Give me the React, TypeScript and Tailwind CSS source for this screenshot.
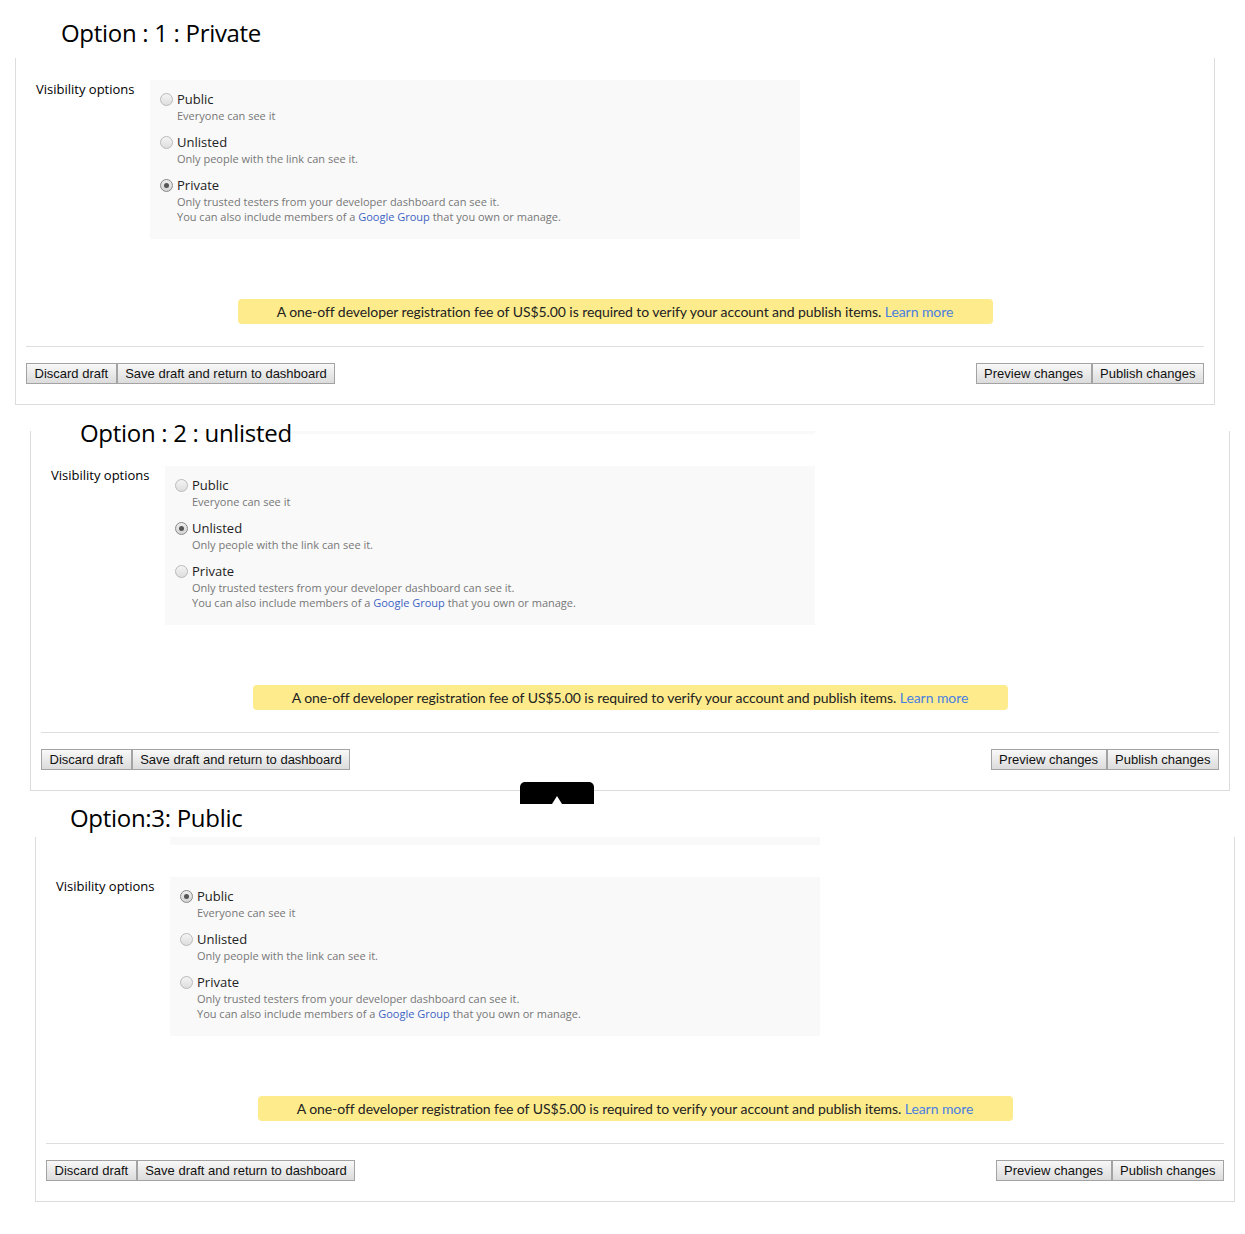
import React from 'react';

type Choice = 'public' | 'unlisted' | 'private';

interface PanelProps {
  title: string;
  titleClass: string; // top margin + left indent of the heading
  boxClass: string; // offset of the bordered box
  selected: Choice;
  strip?: 'thin' | 'thick';
}

const Radio: React.FC<{ checked: boolean }> = ({ checked }) => (
  <span
    className={`mt-[3px] flex h-[13px] w-[13px] shrink-0 items-center justify-center rounded-full border bg-gradient-to-b ${
      checked ? 'border-[#8a8a8a] from-[#eeeeee] to-[#d4d4d4]' : 'border-[#b9b9b9] from-[#f4f4f4] to-[#dedede]'
    }`}
  >
    {checked && <span className="h-[5px] w-[5px] rounded-full bg-[#555]" />}
  </span>
);

const Option: React.FC<{ label: string; checked: boolean; children: React.ReactNode }> = ({ label, checked, children }) => (
  <div>
    <div className="flex items-start gap-[4px]">
      <Radio checked={checked} />
      <span className="text-[13px] leading-[18px] text-[#222]">{label}</span>
    </div>
    <div className="pl-[17px] text-[11px] leading-[15px] text-[#777]">{children}</div>
  </div>
);

const Btn: React.FC<{ children: React.ReactNode }> = ({ children }) => (
  <button className="h-[21px] border border-[#a3a3a3] bg-gradient-to-b from-[#f8f8f8] to-[#dcdcdc] px-[7.5px] font-['Liberation_Sans',Arial,sans-serif] text-[13px] leading-[15px] text-[#111]">
    {children}
  </button>
);

const Panel: React.FC<PanelProps> = ({ title, titleClass, boxClass, selected, strip }) => (
  <section>
    {/* Heading typed over the screenshot */}
    <h2 className={`relative z-10 h-[32px] text-[24px] leading-[31px] tracking-[-0.3px] text-black ${titleClass}`}>{title}</h2>

    <div className={`w-[1200px] border-x border-b border-[#dcdcdc] px-[10px] ${boxClass}`}>
      {strip && (
        <div className={`ml-[124px] w-[650px] bg-[#f9f9f9] ${strip === 'thin' ? 'mb-[32px] h-[3px]' : 'mb-[32px] h-[8px]'}`} />
      )}

      <div className={`flex ${strip ? '' : 'pt-[22px]'}`}>
        <div className="w-[124px] shrink-0 pl-[10px] text-[13px] leading-[18px] text-black">Visibility options</div>
        <div className="flex h-[159px] w-[650px] flex-col gap-[10px] bg-[#f9f9f9] px-[10px] pt-[10px]">
          <Option label="Public" checked={selected === 'public'}>
            Everyone can see it
          </Option>
          <Option label="Unlisted" checked={selected === 'unlisted'}>
            Only people with the link can see it.
          </Option>
          <Option label="Private" checked={selected === 'private'}>
            Only trusted testers from your developer dashboard can see it.
            <br />
            You can also include members of a <a className="text-[#3d63c4]">Google Group</a> that you own or manage.
          </Option>
        </div>
      </div>

      {/* Registration fee notice */}
      <div className="mx-auto mt-[60px] flex h-[25px] w-[755px] items-center justify-center rounded-[4px] bg-[#fdeb8c] font-['Lato',sans-serif] text-[14px] tracking-[-0.07px] text-[#222]">
        <span>
          A one-off developer registration fee of US$5.00 is required to verify your account and publish items.{' '}
          <a className="text-[#4a7fe0]">Learn more</a>
        </span>
      </div>

      <div className="mt-[22px] h-px bg-[#dedede]" />

      <div className="mt-[16px] flex justify-between pb-[20px]">
        <div className="flex">
          <Btn>Discard draft</Btn>
          <Btn>Save draft and return to dashboard</Btn>
        </div>
        <div className="flex">
          <Btn>Preview changes</Btn>
          <Btn>Publish changes</Btn>
        </div>
      </div>
    </div>
  </section>
);

export default function App() {
  return (
    <div className="relative h-[1234px] w-[1245px] overflow-hidden bg-white font-['Open_Sans','Noto_Sans',sans-serif]">
      <Panel title="Option : 1 : Private" titleClass="mt-[17px] pl-[61px]" boxClass="ml-[15px] mt-[9px]" selected="private" />
      <Panel
        title="Option : 2 : unlisted"
        titleClass="mt-[12px] pl-[80px]"
        boxClass="ml-[30px] -mt-[18px]"
        selected="unlisted"
        strip="thin"
      />
      <Panel
        title="Option:3: Public"
        titleClass="mt-[11px] pl-[70px]"
        boxClass="ml-[35px] mt-[3px]"
        selected="public"
        strip="thick"
      />

      {/* black tab left over from the screen grab */}
      <div className="absolute left-[520px] top-[782px] z-20 h-[22px] w-[74px] rounded-t-[5px] bg-black">
        <svg className="absolute left-[32px] top-[14px]" width="10" height="8" viewBox="0 0 10 8">
          <polygon points="5,0 10,8 0,8" fill="#fff" />
        </svg>
      </div>
    </div>
  );
}
